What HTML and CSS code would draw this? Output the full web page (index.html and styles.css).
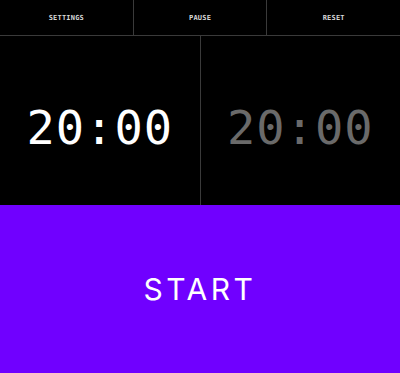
FILE: index.html
```html
<!DOCTYPE html>
<html lang="en">
<head>
    <meta charset="UTF-8">
    <meta name="viewport" content="width=device-width, initial-scale=1.0">
    <title>Chess Clock</title>
    <link rel="stylesheet" href="styles.css">
</head>
<body>
    <div class="app">
        <nav class="toolbar">
            <button class="tool">SETTINGS</button>
            <button class="tool">PAUSE</button>
            <button class="tool">RESET</button>
        </nav>
        <div class="clocks">
            <div class="clock active">20:00</div>
            <div class="clock">20:00</div>
        </div>
        <button class="start">START</button>
    </div>
</body>
</html>
```

FILE: styles.css
```css
body {
    margin: 0;
    background: #000;
    font-family: "DejaVu Sans Mono", monospace;
}

.app {
    display: flex;
    flex-direction: column;
    height: 100vh;
}

.toolbar {
    display: flex;
    height: 35px;
    border-bottom: 1px solid #3a3a3a;
}

.tool {
    flex: 1;
    background: #000;
    color: #d8d8d8;
    border: none;
    border-right: 1px solid #3a3a3a;
    font-family: "DejaVu Sans Mono", monospace;
    font-size: 7px;
    font-weight: bold;
    letter-spacing: 0.2px;
    padding: 0;
}

.tool:last-child {
    border-right: none;
}

.clocks {
    flex: 1;
    display: flex;
}

.clock {
    flex: 1;
    display: flex;
    justify-content: center;
    align-items: center;
    padding-top: 14px;
    font-size: 47px;
    letter-spacing: 1px;
    border-right: 1px solid #3a3a3a;
    color: #6a6a6a;
}

.clock:last-child {
    border-right: none;
}

.clock.active {
    color: #fff;
}

.start {
    flex: 1;
    background: #7000ff;
    color: #fff;
    border: none;
    font-family: "Inter", sans-serif;
    font-size: 30px;
    letter-spacing: 3.5px;
    padding: 0;
}
```
